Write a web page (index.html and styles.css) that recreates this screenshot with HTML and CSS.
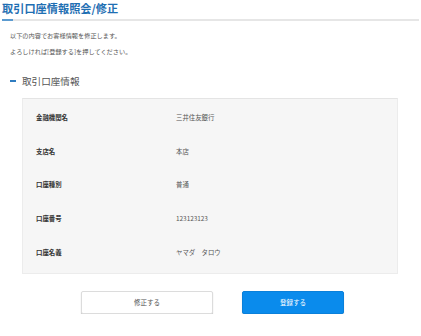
FILE: index.html
```html
<!DOCTYPE html>
<html lang="ja">
<head>
<meta charset="utf-8">
<title>取引口座情報照会/修正</title>
<link rel="stylesheet" href="styles.css">
</head>
<body>
<div class="page">
  <h1 class="title">取引口座情報照会/修正</h1>
  <div class="title-rule"><span class="rule-accent"></span></div>
  <p class="intro">以下の内容でお客様情報を修正します。<br>よろしければ[登録する]を押してください。</p>
  <h2 class="section-title"><span class="section-dash"></span>取引口座情報</h2>
  <div class="panel">
    <div class="row"><div class="label">金融機関名</div><div class="value">三井住友銀行</div></div>
    <div class="row"><div class="label">支店名</div><div class="value">本店</div></div>
    <div class="row"><div class="label">口座種別</div><div class="value">普通</div></div>
    <div class="row"><div class="label">口座番号</div><div class="value">123123123</div></div>
    <div class="row"><div class="label">口座名義</div><div class="value">ヤマダ　タロウ</div></div>
  </div>
  <div class="actions">
    <button class="btn btn-secondary" type="button">修正する</button>
    <button class="btn btn-primary" type="button">登録する</button>
  </div>
</div>
</body>
</html>
```
FILE: styles.css
```css
html, body {
  margin: 0;
  padding: 0;
  background: #ffffff;
}
body {
  font-family: "Noto Sans CJK JP", "Noto Sans", sans-serif;
  color: #444;
}
.page {
  width: 421px;
}
.title {
  margin: 0;
  padding: 1px 0 0 2px;
  height: 17px;
  font-size: 11.2px;
  line-height: 14px;
  font-weight: 700;
  color: #1f6fb3;
}
.title-rule {
  margin: 1px 2px 0 2px;
  height: 2px;
  background: #e6e6e6;
  display: flex;
}
.rule-accent {
  width: 11px;
  height: 2px;
  background: #5b9bd0;
}
.intro {
  margin: 7px 0 0 10px;
  font-size: 6.2px;
  line-height: 16px;
  color: #555;
}
.section-title {
  margin: 14px 0 0 10px;
  display: flex;
  align-items: center;
  font-size: 9.6px;
  line-height: 14px;
  font-weight: 400;
  color: #555;
}
.section-dash {
  width: 6px;
  height: 2px;
  background: #2f7cc0;
  margin-right: 6px;
}
.panel {
  margin: 10px 22px 0 22px;
  width: 376px;
  box-sizing: border-box;
  background: #f6f6f6;
  border: 1px solid #ececec;
  border-top-color: #e4e4e4;
  padding: 2px 0 4px 13px;
}
.row {
  display: grid;
  grid-template-columns: 140px 1fr;
  align-items: center;
  height: 33.6px;
  font-size: 6.4px;
}
.label {
  font-weight: 700;
  color: #333;
}
.value {
  color: #555;
}
.actions {
  display: flex;
  justify-content: center;
  gap: 29px;
  margin-top: 17px;
  padding-left: 4px;
}
.btn {
  font-family: inherit;
  font-size: 6.5px;
  height: 23px;
  border-radius: 2px;
  padding: 0;
  cursor: pointer;
}
.btn-secondary {
  width: 132px;
  background: #ffffff;
  color: #555;
  border: 1px solid #dcdcdc;
  box-shadow: 0 1px 1px rgba(0, 0, 0, 0.25);
}
.btn-primary {
  width: 102px;
  background: #0a8bec;
  color: #ffffff;
  border: 1px solid #0a80da;
  box-shadow: 0 1px 1px rgba(0, 0, 0, 0.2);
}
```
